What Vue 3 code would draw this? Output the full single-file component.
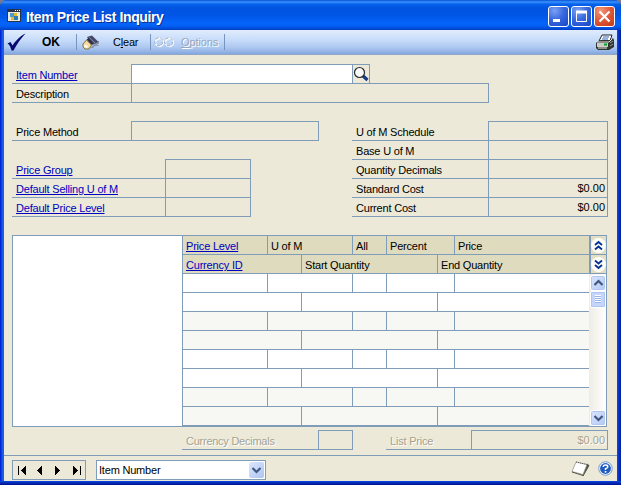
<script setup>
const costs = [
  { label: 'U of M Schedule', value: '' },
  { label: 'Base U of M', value: '' },
  { label: 'Quantity Decimals', value: '' },
  { label: 'Standard Cost', value: '$0.00' },
  { label: 'Current Cost', value: '$0.00' },
]
const defaults = ['Price Group', 'Default Selling U of M', 'Default Price Level']
const records = [0, 1, 2, 3]
</script>

<template>
  <div class="window">
    <header class="titlebar">
      <svg class="app-icon" width="14" height="13" viewBox="0 0 14 13" shape-rendering="crispEdges">
        <rect width="14" height="13" fill="#2a3448" /><rect x="1" y="3" width="12" height="9" fill="#e9e8dc" />
        <rect x="8" y="1" width="1" height="1" fill="#fff" /><rect x="10" y="1" width="1" height="1" fill="#fff" /><rect x="12" y="1" width="1" height="1" fill="#fff" />
        <rect x="3" y="4" width="4" height="4" fill="#4c9ccb" /><rect x="7" y="4" width="3" height="3" fill="#e2b92e" />
        <rect x="4" y="8" width="3" height="3" fill="#e2b92e" /><rect x="7" y="7" width="4" height="4" fill="#287db8" />
      </svg>
      <h1>Item Price List Inquiry</h1>
      <div class="caption-buttons">
        <button class="cap"><svg viewBox="0 0 21 21"><path d="M5 14.500h7" stroke="#fff" stroke-width="3" /></svg></button>
        <button class="cap"><svg viewBox="0 0 21 21"><path d="M5.500 5v10.500h10V5" fill="none" stroke="#fff" /><path d="M5 6h11" stroke="#fff" stroke-width="3" /></svg></button>
        <button class="cap close"><svg viewBox="0 0 21 21"><path d="M5.500 5.500l10 10M15.500 5.500l-10 10" stroke="#fff" stroke-width="2.200" /></svg></button>
      </div>
    </header>

    <nav class="toolbar">
      <button class="tool ok">
        <svg width="19" height="18" viewBox="0 0 19 18"><path d="M0.500 10.500L3.500 9l2 3.500C8.500 8 13 3 18.500 0.500 14 5 10 11 6.500 17.500H4.500C3.500 14 2.500 11.500 0.500 10.500Z" fill="#080870" /></svg>
        <b>OK</b>
      </button>
      <button class="tool clear">
        <svg width="18" height="15" viewBox="0 0 18 15">
          <path d="M8 13l8-7h1v3h-2l2 2h-4l-2 2z" fill="#8d97aa" />
          <path d="M5 2l5-1.500L16.500 7 10 10z" fill="#45496b" /><path d="M7 2.500l6 5.500" stroke="#858cab" />
          <path d="M4.500 4.500L7 3l4 5.500-2 1.500z" fill="#2d2d42" />
          <path d="M4.500 5L1 9v3l2 2h4l2.500-4z" fill="#f3dc9c" stroke="#85724b" /><path d="M2.500 10.500l3 1.500" stroke="#fff" stroke-width="2" />
        </svg>
        <span>C<u>l</u>ear</span>
      </button>
      <button class="tool options" disabled>
        <svg width="20" height="11" viewBox="0 0 20 11" fill="none"><g stroke="#fff" stroke-width="1.300"><circle cx="5.500" cy="5.500" r="4" /><circle cx="15.500" cy="5.500" r="4" /></g><g stroke="#9fa9b9" stroke-dasharray="3 2"><circle cx="4.800" cy="4.800" r="4" /><circle cx="14.800" cy="4.800" r="4" /></g></svg>
        <span><u>O</u>ptions</span>
      </button>
      <svg class="printer" width="18" height="17" viewBox="0 0 18 17">
        <path d="M6 1h10l-2 6H3z" fill="#fff" stroke="#222" /><path d="M7 3h6M6 5h6" stroke="#3466bc" />
        <path d="M1 8l4-2h10l2-2 1 2v7l-5 3H2l-2-2V9z" fill="#31342f" />
        <path d="M1 8h12l3-3" fill="none" stroke="#e8e8e4" /><path d="M1 9h11v4H1z" fill="#c9cdc8" />
        <path d="M8 10.500h3" stroke="#00a521" stroke-width="2" /><path d="M2 14h9" stroke="#e8e8e4" /><path d="M14 9l3-2M14 12l3-2" stroke="#999" />
      </svg>
    </nav>

    <main>
      <section class="item">
        <div class="field"><a class="label">Item Number</a>
          <div class="box item-input"></div>
          <button class="lookup"><svg width="16" height="16" viewBox="0 0 16 16"><path d="M10 10l4.500 4" stroke="#173a86" stroke-width="3.200" /><circle cx="6.500" cy="6.500" r="5" fill="#f6f9f6" stroke="#2a2a30" stroke-width="1.200" /></svg></button>
        </div>
        <div class="field"><span class="label">Description</span><div class="box description"></div></div>
      </section>

      <section class="details">
        <div class="left">
          <div class="field"><span class="label">Price Method</span><div class="box method"></div></div>
          <div class="defaults">
            <div v-for="name in defaults" :key="name" class="field"><a class="label wide">{{ name }}</a><div class="box default"></div></div>
          </div>
        </div>
        <div class="costs">
          <div v-for="c in costs" :key="c.label" class="field"><span class="label cost">{{ c.label }}</span><div class="box amount">{{ c.value }}</div></div>
        </div>
      </section>

      <section class="price-list">
        <div class="tree"></div>
        <div class="rows">
          <div class="line top head"><a>Price Level</a><span>U of M</span><span>All</span><span>Percent</span><span>Price</span></div>
          <div class="line sub head"><a>Currency ID</a><span>Start Quantity</span><span>End Quantity</span></div>
          <template v-for="r in records" :key="r">
            <div class="line top" :class="{ alt: r % 2 }"><span v-for="n in 5" :key="n"></span></div>
            <div class="line sub" :class="{ alt: r % 2 }"><span v-for="n in 3" :key="n"></span></div>
          </template>
        </div>
        <div class="rail">
          <button class="expand"><svg width="15" height="15" viewBox="0 0 15 15"><path d="M4 7l3.500-3L11 7M4 11.500l3.500-3 3.500 3" /></svg></button>
          <button class="expand"><svg width="15" height="15" viewBox="0 0 15 15"><path d="M4 3.500l3.500 3 3.500-3M4 8l3.500 3L11 8" /></svg></button>
          <div class="scroll">
            <button class="scroll-btn"><svg width="13" height="14" viewBox="0 0 13 14"><path d="M2.500 9l4-4 4 4" /></svg></button>
            <div class="thumb"><i></i><i></i><i></i><i></i></div>
            <div class="track"></div>
            <button class="scroll-btn"><svg width="13" height="14" viewBox="0 0 13 14"><path d="M2.500 5l4 4 4-4" /></svg></button>
          </div>
        </div>
      </section>

      <section class="totals">
        <div class="field"><span class="label decimals">Currency Decimals</span><div class="box digits"></div></div>
        <div class="field"><span class="label list">List Price</span><div class="box list-amount">$0.00</div></div>
      </section>
    </main>

    <footer>
      <div class="records">
        <svg width="72" height="18" viewBox="0 0 72 18" fill="#000" shape-rendering="crispEdges">
          <path d="M5 5h1v9H5zM13 5v9L8 9.500zM29 5v9l-5-4.500zM42 5v9l5-4.500zM60 5v9l5-4.500zM67 5h1v9h-1z" />
        </svg>
      </div>
      <div class="combo"><span>Item Number</span><button><svg width="15" height="16" viewBox="0 0 15 16"><path d="M3.500 6l4 4 4-4" /></svg></button></div>
      <svg class="note" width="20" height="16" viewBox="0 0 20 16"><path d="M12 15l6-10.500-2-1.500-4 10z" fill="#55564a" stroke="#55564a" /><path d="M5 1l11 2.500-4 10L1 10.500z" fill="#fff" stroke="#8c8c7a" stroke-width=".7" /><path d="M5 1l11 2.500" stroke="#555" stroke-dasharray="1 1" /><path d="M1 11l11 3.500" stroke="#55564a" /></svg>
      <svg class="help" width="15" height="15" viewBox="0 0 15 15"><circle cx="7.500" cy="7.500" r="6.800" fill="#eef5ff" stroke="#7c9fcc" /><circle cx="7.500" cy="7.500" r="5.400" fill="#205bc3" /><path d="M5.300 6Q5.200 4 7.500 4t2.300 1.700Q9.800 7 7.500 7.700V9" fill="none" stroke="#fff" stroke-width="1.500" /><path d="M6.700 10h1.700v1.600H6.700z" fill="#fff" /></svg>
    </footer>
  </div>
</template>

<style>
body { margin: 0; background: #777b8d; }
</style>

<style scoped>
* { box-sizing: border-box; }
.window { width: 621px; height: 485px; padding: 0 4px 4px; display: flex; flex-direction: column; overflow: hidden; border-radius: 7px 7px 0 0; background: linear-gradient(0deg, #00138c 0, #0527b4 2px, #0a4be0 4px, transparent 4px), linear-gradient(90deg, #0019cf 0, #0831d9 1px, #1a6bee 3px, #0855dd 4px, #0855dd 617px, #0838d0 618px, #001ea0 621px); color: #000; font: 11px/13px "Liberation Sans", Arial, sans-serif; letter-spacing: -0.2px; }
button { margin: 0; padding: 0; border: 0; background: none; font: inherit; letter-spacing: inherit; color: inherit; }
svg { display: block; flex: none; }
a { color: #0000c0; text-decoration: underline; }
.titlebar { flex: none; height: 30px; margin: 0 -4px; padding: 2px 6px 0 7px; display: flex; align-items: center; background: linear-gradient(#0650d4 0, #3c94ff 2px, #0763ec 4px, #0054df 8px, #0055e5 15px, #0564fb 23px, #0260f4 26px, #003fc3 30px); }
.app-icon { margin-bottom: 1px; }
h1 { margin: 2px 0 0 5px; flex: 1; color: #fff; font: bold 14px/18px "Liberation Sans", Arial, sans-serif; letter-spacing: -0.38px; text-shadow: 1px 1px #092f91; white-space: nowrap; }
.caption-buttons { display: flex; gap: 2px; margin-top: 1px; }
.cap { width: 21px; height: 21px; border: 1px solid #fff; border-radius: 3px; background: radial-gradient(circle at 30% 20%, #7ba1f4, #3969df 45%, #1745c5); }
.cap svg { width: 21px; height: 21px; margin: -1px; }
.close { background: radial-gradient(circle at 30% 20%, #f2987b, #df5736 50%, #c13816); }
.toolbar { flex: none; height: 25px; display: flex; align-items: center; padding: 0 3px; background: linear-gradient(#e1ecfd, #c8ddfa 40%, #abc6ef 75%, #83a7df); border-bottom: 1px solid #91a6c8; }
.tool { display: flex; align-items: center; height: 16px; border-right: 1px solid #7895bf; white-space: nowrap; }
.ok { width: 70px; gap: 16px; }
.ok b { font-size: 12px; }
.clear { width: 74px; padding-left: 5px; gap: 13px; letter-spacing: -0.2px; }
.options { width: 74px; padding-left: 3px; gap: 7px; letter-spacing: -0.1px; color: #98a7be; text-shadow: 1px 1px #fff; }
.printer { margin-left: auto; }
main { flex: 1; padding: 10px 9px 0 8px; background: #ece9d8; }
.field { height: 19px; display: flex; }
.label { width: 119px; height: 19px; padding: 4px 0 0 4px; border-bottom: 1px solid #7f9db9; white-space: nowrap; }
.box { height: 20px; margin-top: -1px; border: 1px solid #7f9db9; padding: 3px 2px 0; text-align: right; letter-spacing: 0; }
.item-input { width: 222px; background: #fff; }
.lookup { width: 18px; height: 20px; margin: -1px 0 0 -1px; border: 1px solid #7f9db9; padding: 0; background: #ece9d8; }
.description { width: 358px; }
.details { display: flex; margin-top: 19px; }
.left { width: 340px; }
.method { width: 188px; }
.defaults { margin-top: 19px; }
.wide { width: 153px; }
.default { width: 86px; }
.cost { width: 136px; }
.amount { width: 120px; }
.price-list { display: flex; height: 192px; width: 595px; margin-top: 18px; border: 1px solid #7f9db9; }
.tree { width: 170px; background: #fff; border-right: 1px solid #7f9db9; }
.rows { width: 406px; border-bottom: 1px solid #7f9db9; }
.line { height: 19px; display: grid; background: #fff; border-bottom: 1px solid #7f9db9; }
.line > * { padding: 4px 0 0 3px; border-right: 1px solid #7f9db9; white-space: nowrap; }
.line > :last-child { border-right: 0; }
.top { grid-template-columns: 85px 85px 34px 68px 1fr; }
.sub { grid-template-columns: 119px 136px 1fr; }
.line.alt { background: #f7f7f3; }
.line.head { background: #dfdbbf; }
.rail { width: 17px; display: flex; flex-direction: column; background: #fff; }
.expand { height: 19px; border: solid #7f9db9; border-width: 0 0 1px 2px; background: #e2dec6; }
.expand svg { margin-top: 1px; border-radius: 50%; background: #fffef6; fill: none; stroke: #003397; stroke-width: 1.8; }
.scroll { flex: 1; display: flex; flex-direction: column; background: linear-gradient(90deg, #eeece4, #fff); padding: 1px 0 0 1px; }
.scroll-btn { width: 16px; height: 16px; padding-left: 1px; border: 1px solid #fff; border-radius: 3px; background: linear-gradient(135deg, #d9e5ff, #b4c9f5); box-shadow: inset 0 0 0 1px #b3c6ed; }
.scroll-btn svg, .combo svg { fill: none; stroke: #405780; stroke-width: 2.2; }
.thumb { width: 16px; height: 17px; padding: 3px 4px; border: 1px solid #fff; border-radius: 2px; background: #c5d5fc; box-shadow: inset 0 0 0 1px #aec4f3; }
.thumb i { display: block; height: 1px; margin-bottom: 1px; background: #fff; box-shadow: 0 1px #98b5ea; }
.track { flex: 1; }
.totals { display: flex; margin: 4px 0 0 170px; color: #a5a28f; text-shadow: 1px 1px #fff; }
.decimals { width: 136px; letter-spacing: -0.25px; }
.digits { width: 35px; margin-right: 33px; }
.list { width: 85px; }
.list-amount { width: 137px; }
footer { flex: none; height: 26px; padding: 4px 4px 0 8px; display: flex; border-top: 1px solid #7f9db9; background: #ece9d8; }
.records { width: 74px; height: 20px; border: 1px solid #7f9db9; }
.combo { width: 170px; height: 20px; margin-left: 10px; padding: 0 1px 0 2px; display: flex; align-items: center; justify-content: space-between; border: 1px solid #7f9db9; background: #fff; }
.combo button { border-radius: 2px; background: linear-gradient(135deg, #dce7ff, #adc4f1); }
.note { margin: 1px 0 0 auto; }
.help { margin: 1px 0 0 7px; }
</style>
